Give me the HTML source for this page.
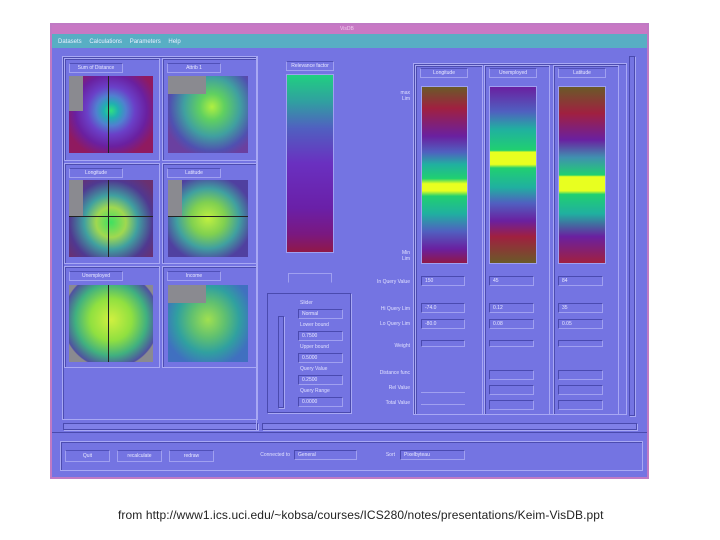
<!DOCTYPE html>
<html><head><style>
*{margin:0;padding:0;box-sizing:border-box}
body{width:720px;height:540px;background:#fff;position:relative;overflow:hidden;font-family:"Liberation Sans",sans-serif}
.a{position:absolute}
.win{left:50px;top:23px;width:599px;height:456px;background:#7474e2;border:2px solid #c07ac4}
.fr{position:absolute;border:1px solid #a8a8f4;box-shadow:inset 1px 1px 0 #4c4cb0}
.dk{position:absolute;border:1px solid #4a4aae;box-shadow:1px 1px 0 #a8a8f4}
.lbl{position:absolute;height:10px;border:1px solid #a0a0f0;border-top-color:#5050b8;font-size:5px;color:#e8e8ff;text-align:center;line-height:8px}
.in{position:absolute;height:10px;border:1px solid #a0a0f0;border-top-color:#4a4ab0;border-left-color:#4a4ab0;font-size:5px;color:#e8e8ff;line-height:8px;padding-left:3px}
.t{position:absolute;font-size:5px;color:#e0e0ff;text-align:right}
.img{position:absolute;background:#8a8a90}
.vl{position:absolute;width:1px;background:#222}
</style></head><body>
<div class="a win"></div>
<div class="a" style="left:52px;top:25px;width:595px;height:9px;background:#c878c4"></div>
<div class="a" style="top:26px;font-size:5px;color:#f0d0f0;left:340px">VisDB</div>
<div class="a" style="left:52px;top:34px;width:595px;height:14px;background:#58aec4"></div>
<div class="a" style="left:58px;top:39px;font-size:6px;color:#e8f0ff;word-spacing:6px">Datasets Calculations Parameters Help</div>

<div class="fr" style="left:62px;top:56px;width:196px;height:364px"></div>
<div class="fr" style="left:64px;top:58px;width:96px;height:103px"></div>
<div class="fr" style="left:162px;top:58px;width:96px;height:103px"></div>
<div class="fr" style="left:64px;top:163px;width:96px;height:101px"></div>
<div class="fr" style="left:162px;top:163px;width:96px;height:101px"></div>
<div class="fr" style="left:64px;top:266px;width:96px;height:102px"></div>
<div class="fr" style="left:162px;top:266px;width:96px;height:102px"></div>
<div class="lbl" style="left:69px;top:63px;width:54px">Sum of Distance</div>
<div class="lbl" style="left:167px;top:63px;width:54px">Attrib 1</div>
<div class="lbl" style="left:69px;top:168px;width:54px">Longitude</div>
<div class="lbl" style="left:167px;top:168px;width:54px">Latitude</div>
<div class="lbl" style="left:69px;top:271px;width:54px">Unemployed</div>
<div class="lbl" style="left:167px;top:271px;width:54px">Income</div>

<div class="img" style="left:69px;top:76px;width:84px;height:77px;background:radial-gradient(circle at 50% 45%,#30e080 0,#20b0b0 12%,#5080d0 25%,#6a40c8 40%,#6a20a0 60%,#901a60 80%)"></div>
<div class="a" style="left:69px;top:76px;width:14px;height:35px;background:#8a8a90"></div>
<div class="vl" style="left:108px;top:76px;height:77px"></div>
<div class="img" style="left:168px;top:76px;width:80px;height:77px;background:radial-gradient(ellipse at 55% 40%,#b0f040 0,#60d060 20%,#40a0a0 45%,#5050b0 68%,#6a40a0 80%)"></div>
<div class="a" style="left:168px;top:76px;width:38px;height:18px;background:#8a8a90"></div>
<div class="img" style="left:69px;top:180px;width:84px;height:77px;background:radial-gradient(ellipse at 50% 55%,#40e060 0,#a0d850 25%,#40a0a0 45%,#503890 70%,#6a3070 90%)"></div>
<div class="a" style="left:69px;top:180px;width:14px;height:36px;background:#8a8a90"></div>
<div class="a" style="left:69px;top:216px;width:84px;height:1px;background:#222"></div>
<div class="vl" style="left:108px;top:180px;height:77px"></div>
<div class="img" style="left:168px;top:180px;width:80px;height:77px;background:radial-gradient(ellipse at 50% 50%,#c0f040 0,#80d050 30%,#40a0a0 55%,#5040a0 80%)"></div>
<div class="a" style="left:168px;top:180px;width:14px;height:36px;background:#8a8a90"></div>
<div class="a" style="left:168px;top:216px;width:80px;height:1px;background:#222"></div>
<div class="img" style="left:69px;top:285px;width:84px;height:77px;background:radial-gradient(ellipse at 50% 45%,#d0f040 0,#90e040 35%,#40b080 60%,#5050a0 80%,#8a8a90 82%)"></div>
<div class="vl" style="left:108px;top:285px;height:77px"></div>
<div class="img" style="left:168px;top:285px;width:80px;height:77px;background:radial-gradient(ellipse at 50% 45%,#a0e050 0,#60c070 30%,#30a0a0 55%,#4070c0 80%)"></div>
<div class="a" style="left:168px;top:285px;width:38px;height:18px;background:#8a8a90"></div>
<div class="dk" style="left:63px;top:423px;width:195px;height:7px;background:#8080e8"></div>

<div class="a" style="left:256px;top:56px;width:1px;height:375px;background:#a8a8f4"></div>
<div class="lbl" style="left:286px;top:61px;width:48px">Relevance factor</div>
<div class="a" style="left:286px;top:74px;width:48px;height:179px;border:1px solid #a0a0f0;background:linear-gradient(#20d080 0,#30a0a0 15%,#5060c0 30%,#6a30c0 50%,#6a20a8 75%,#7a1880 90%,#901848 100%)"></div>
<div class="in" style="left:288px;top:273px;width:44px;border-color:#a0a0f0 #a0a0f0 transparent #a0a0f0"></div>

<div class="dk" style="left:267px;top:293px;width:84px;height:120px"></div>
<div class="dk" style="left:278px;top:316px;width:6px;height:92px"></div>
<div class="t" style="left:300px;top:300px">Slider</div>
<div class="in" style="left:298px;top:309px;width:45px">Normal</div>
<div class="in" style="left:298px;top:331px;width:45px">0.7500</div>
<div class="in" style="left:298px;top:353px;width:45px">0.5000</div>
<div class="in" style="left:298px;top:375px;width:45px">0.2500</div>
<div class="in" style="left:298px;top:397px;width:45px">0.0000</div>
<div class="t" style="left:300px;top:322px">Lower bound</div>
<div class="t" style="left:300px;top:344px">Upper bound</div>
<div class="t" style="left:300px;top:366px">Query Value</div>
<div class="t" style="left:300px;top:388px">Query Range</div>

<div class="t" style="left:370px;top:90px;width:40px">max<br>Lim</div>
<div class="t" style="left:370px;top:250px;width:40px">Min<br>Lim</div>
<div class="t" style="left:360px;top:279px;width:50px">In Query Value</div>
<div class="t" style="left:360px;top:306px;width:50px">Hi Query Lim</div>
<div class="t" style="left:360px;top:321px;width:50px">Lo Query Lim</div>
<div class="t" style="left:360px;top:343px;width:50px">Weight</div>
<div class="t" style="left:360px;top:370px;width:50px">Distance func</div>
<div class="t" style="left:360px;top:385px;width:50px">Rel Value</div>
<div class="t" style="left:360px;top:400px;width:50px">Total Value</div>

<div class="fr" style="left:413px;top:63px;width:214px;height:352px"></div>
<div class="fr" style="left:415px;top:65px;width:68px;height:350px"></div>
<div class="fr" style="left:484px;top:65px;width:66px;height:350px"></div>
<div class="fr" style="left:553px;top:65px;width:66px;height:350px"></div>
<div class="dk" style="left:629px;top:56px;width:6px;height:360px"></div>
<div class="dk" style="left:262px;top:423px;width:375px;height:7px;background:#8080e8"></div>

<div class="lbl" style="left:420px;top:68px;width:48px">Longitude</div>
<div class="lbl" style="left:489px;top:68px;width:48px">Unemployed</div>
<div class="lbl" style="left:558px;top:68px;width:48px">Latitude</div>
<div class="a" style="left:421px;top:86px;width:47px;height:178px;border:1px solid #a0a0f0;background:linear-gradient(#6a5a28 0,#a02040 12%,#6a20a0 28%,#5060c0 37%,#20b0a0 44%,#20d070 52%,#e8ff20 55%,#e8ff20 59%,#20d070 62%,#20b0a0 72%,#5060c0 82%,#6a20a0 92%,#901848 100%)"></div>
<div class="a" style="left:489px;top:86px;width:48px;height:178px;border:1px solid #a0a0f0;background:linear-gradient(#6a20a0 0,#5060c0 14%,#20b0a0 24%,#20d070 36%,#e8ff20 37%,#e8ff20 44%,#20d070 46%,#20b0a0 57%,#5060c0 66%,#6a20a0 76%,#a02040 85%,#6a5a28 100%)"></div>
<div class="a" style="left:558px;top:86px;width:48px;height:178px;border:1px solid #a0a0f0;background:linear-gradient(#6a5a28 0,#a02040 15%,#6a20a0 30%,#4090b0 40%,#20d070 50%,#e8ff20 51%,#e8ff20 59%,#20d070 61%,#20b0a0 72%,#6a20a0 85%,#a02040 100%)"></div>

<div class="in" style="left:421px;top:276px;width:44px">150</div>
<div class="in" style="left:489px;top:276px;width:45px">45</div>
<div class="in" style="left:558px;top:276px;width:45px">84</div>
<div class="in" style="left:421px;top:303px;width:44px">-74.0</div>
<div class="in" style="left:489px;top:303px;width:45px">0.12</div>
<div class="in" style="left:558px;top:303px;width:45px">35</div>
<div class="in" style="left:421px;top:319px;width:44px">-80.0</div>
<div class="in" style="left:489px;top:319px;width:45px">0.08</div>
<div class="in" style="left:558px;top:319px;width:45px">0.05</div>
<div class="in" style="left:421px;top:340px;width:44px;height:7px"></div>
<div class="in" style="left:489px;top:340px;width:45px;height:7px"></div>
<div class="in" style="left:558px;top:340px;width:45px;height:7px"></div>
<div class="in" style="left:489px;top:370px;width:45px"></div>
<div class="in" style="left:558px;top:370px;width:45px"></div>
<div class="in" style="left:489px;top:385px;width:45px"></div>
<div class="in" style="left:558px;top:385px;width:45px"></div>
<div class="in" style="left:489px;top:400px;width:45px"></div>
<div class="in" style="left:558px;top:400px;width:45px"></div>
<div class="a" style="left:421px;top:392px;width:44px;height:1px;background:#a0a0f0"></div>
<div class="a" style="left:421px;top:404px;width:44px;height:1px;background:#a0a0f0"></div>

<div class="a" style="left:52px;top:432px;width:595px;height:1px;background:#4a4aae"></div>
<div class="fr" style="left:60px;top:441px;width:583px;height:30px"></div>
<div class="lbl" style="left:65px;top:450px;width:45px;height:12px;line-height:10px">Quit</div>
<div class="lbl" style="left:117px;top:450px;width:45px;height:12px;line-height:10px">recalculate</div>
<div class="lbl" style="left:169px;top:450px;width:45px;height:12px;line-height:10px">redraw</div>
<div class="t" style="left:245px;top:452px;width:45px">Connected to</div>
<div class="in" style="left:294px;top:450px;width:63px">General</div>
<div class="t" style="left:360px;top:452px;width:35px">Sort</div>
<div class="in" style="left:400px;top:450px;width:65px">Pixelbyteau</div>

<div class="a" style="left:118px;top:508px;font-size:12px;color:#222;letter-spacing:0.1px;white-space:nowrap">from http://www1.ics.uci.edu/~kobsa/courses/ICS280/notes/presentations/Keim-VisDB.ppt</div>
</body></html>
